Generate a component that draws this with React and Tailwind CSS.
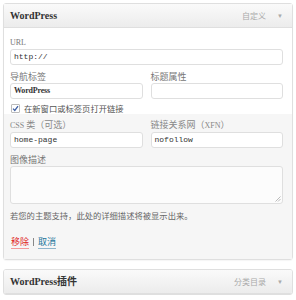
import React from "react";

const cjk = "font-['Noto_Sans_CJK_SC',sans-serif]";

function Header({ title, right }) {
  return (
    <div className="flex h-[24px] items-center justify-between border-b border-[#dfdfdf] bg-[linear-gradient(#fafafa,#ececec)] pl-[6px] pr-[9px]">
      <span className={`font-['Liberation_Serif','Noto_Sans_CJK_SC',serif] text-[10px] font-bold leading-none text-[#333]`}>
        {title}
      </span>
      <span className="flex items-center">
        <span className={`${cjk} text-[8px] leading-none text-[#aaa]`}>{right}</span>
        <span className="ml-[11px] text-[6px] leading-none text-[#aaa]">▼</span>
      </span>
    </div>
  );
}

function Label({ children }) {
  return (
    <div className={`${cjk} h-[12px] text-[9px] leading-[12px] text-[#777]`}>
      {children}
    </div>
  );
}

function Input({ value, mono = true }) {
  return (
    <div
      className={`flex h-[16px] items-center rounded-[3px] border border-[#dfdfdf] bg-white px-[3px] text-[8px] leading-none text-[#333] ${
        mono ? "font-['Liberation_Mono',monospace]" : "font-['Liberation_Serif',serif] font-bold tracking-[-0.2px]"
      }`}
    >
      {value}
    </div>
  );
}

export default function App() {
  return (
    <div className="h-[300px] w-[296px] bg-white pt-[3px] pl-[3px]">
      <div className="w-[290px] rounded-[3px] border border-[#dfdfdf] shadow-[0_1px_1px_rgba(0,0,0,0.04)]">
        <Header title="WordPress" right="自定义" />
        <div className="bg-white pl-[6px] pr-[9px] pt-[10px]">
          <div className="h-[10px] font-['Liberation_Serif',serif] text-[8px] leading-[10px] text-[#777]">URL</div>
          <div className="mt-[1px]">
            <Input value="http://" />
          </div>
          <div className="mt-[6px] grid grid-cols-2 gap-x-[8px]">
            <div>
              <Label>导航标签</Label>
              <Input value="WordPress" mono={false} />
            </div>
            <div>
              <Label>标题属性</Label>
              <Input value="" />
            </div>
          </div>
          <div className="mt-[3px] flex h-[12px] items-center">
            <span className="ml-[1px] flex h-[9px] w-[9px] items-center justify-center rounded-[1px] border border-[#bbb] bg-white">
              <svg width="7" height="7" viewBox="0 0 7 7">
                <path d="M1 3.6 L2.8 5.4 L6 1.2" fill="none" stroke="#3e5fa3" strokeWidth="1.3" />
              </svg>
            </span>
            <span className={`${cjk} ml-[4px] text-[8.3px] leading-none text-[#555]`}>在新窗口或标签页打开链接</span>
          </div>
        </div>
        <div className="bg-[#f6f6f6] pb-[10px] pl-[6px] pr-[9px] pt-[5px]">
          <div className="grid grid-cols-2 gap-x-[8px]">
            <div>
              <div className="h-[12px] text-[9px] leading-[12px] text-[#888]">
                <span className="font-['Liberation_Serif',serif] text-[8px]">CSS </span>
                <span className={cjk}>类（可选）</span>
              </div>
              <div className="mt-[1px]">
                <Input value="home-page" />
              </div>
            </div>
            <div>
              <div className="h-[12px] text-[9px] leading-[12px] text-[#888]">
                <span className={cjk}>链接关系网（</span>
                <span className="font-['Liberation_Serif',serif] text-[8px]">XFN</span>
                <span className={cjk}>）</span>
              </div>
              <div className="mt-[1px]">
                <Input value="nofollow" />
              </div>
            </div>
          </div>
          <div className="mt-[6px]">
            <Label>图像描述</Label>
          </div>
          <div className="relative h-[38px] rounded-[3px] border border-[#dfdfdf] bg-[#fcfcfc]">
            <svg className="absolute bottom-[1px] right-[1px]" width="6" height="6" viewBox="0 0 6 6">
              <path d="M5.5 0.5 L0.5 5.5 M5.5 3 L3 5.5" stroke="#aaa" strokeWidth="0.8" />
            </svg>
          </div>
          <div className={`${cjk} mt-[5px] h-[12px] text-[8.3px] leading-[12px] text-[#666]`}>
            若您的主题支持，此处的详细描述将被显示出来。
          </div>
          <div className={`${cjk} mt-[15px] flex h-[13px] items-start text-[9px] leading-[12px]`}>
            <span className="ml-[1px] border-b border-[#f39a9a] text-[#e02020]">移除</span>
            <span className="mx-[4px] mt-[2px] h-[8px] w-[1px] bg-[#888]"></span>
            <span className="border-b border-[#8fb6cc] text-[#21759b]">取消</span>
          </div>
        </div>
      </div>
      <div className="mt-[9px] w-[290px] overflow-hidden rounded-[3px] border border-[#dfdfdf]">
        <Header title="WordPress插件" right="分类目录" />
      </div>
    </div>
  );
}
